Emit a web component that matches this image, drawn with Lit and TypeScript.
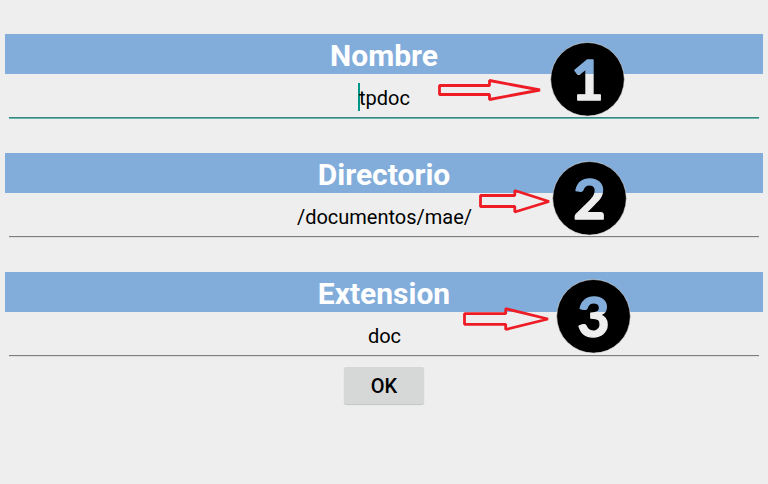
import { LitElement, html, css, svg } from "lit";
import { customElement, property } from "lit/decorators.js";

@customElement("form-field")
class FormField extends LitElement {
  @property() label = "";
  @property() value = "";
  @property({ type: Boolean, reflect: true }) active = false;

  static styles = css`
    :host { display: block; height: 85px; }
    .label {
      height: 40px; line-height: 43px; background: #82addb; color: #fff;
      font-size: 30px; font-weight: 700; text-align: center;
    }
    .entry {
      box-sizing: border-box; height: 45px; margin: 0 4px; padding-top: 9px;
      display: flex; justify-content: center; color: #000;
      font-size: 20px; line-height: 30px;
      border-bottom: 1px solid #dcdcdc;
      background: linear-gradient(#7f7f7f, #7f7f7f) 0 100% / 100% 1px no-repeat;
    }
    .entry { padding-left: 1px; }
    .caret { width: 2px; height: 28px; margin-right: -1px; margin-left: -1px; background: #009688; }
    :host([active]) .entry {
      border-bottom-color: #69b5ae;
      background-image: linear-gradient(#35877f, #35877f);
    }
  `;

  render() {
    return html`
      <div class="label">${this.label}</div>
      <div class="entry">
        ${this.active ? html`<span class="caret"></span>` : ""}<span>${this.value}</span>
      </div>`;
  }
}

const marks = [
  { n: "1", cx: 587.5, cy: 79.3, split: 74, arrow: "M439.5 85.5H489.5V80.5L540 90L489.5 99.5V94.5H439.5Z" },
  { n: "2", cx: 589.5, cy: 198.3, split: 193, arrow: "M480.5 195.5H514.8V190.5L549 201.5L514.8 212V206.5H480.5Z" },
  { n: "3", cx: 593.5, cy: 316.3, split: 312, arrow: "M464.5 313.7H505.7V308.7L548 319L505.7 329.5V324.3H464.5Z" },
];

@customElement("app-root")
class AppRoot extends LitElement {
  static styles = css`
    :host {
      display: block; position: relative; box-sizing: border-box;
      width: 768px; height: 484px; padding: 34px 5px 0; overflow: hidden;
      background: #eee; font-family: Roboto, sans-serif;
    }
    .fields { display: grid; gap: 34px; }
    .ok {
      display: block; width: 80px; height: 37px; margin: 10px auto 0; padding: 2px 0 0;
      border: 0; border-radius: 2px; background: #d6d8d7; color: #000;
      box-shadow: 0 1px 1px #c4c4c4; font: 500 20px/35px Roboto, sans-serif;
    }
    .notes { position: absolute; inset: 0; pointer-events: none; }
    .arrow { fill: none; stroke: #ee1c25; stroke-width: 2.8; stroke-linejoin: bevel; }
    .digit {
      font: 700 56px Lato, sans-serif; text-anchor: middle;
      stroke-width: 1.4; stroke-linejoin: round;
    }
  `;

  render() {
    return html`
      <div class="fields">
        <form-field label="Nombre" value="tpdoc" active></form-field>
        <form-field label="Directorio" value="/documentos/mae/"></form-field>
        <form-field label="Extension" value="doc"></form-field>
      </div>
      <button class="ok">OK</button>
      <svg class="notes" width="768" height="484">
        ${marks.map((m) => svg`
          <linearGradient id=${"g" + m.n} gradientUnits="userSpaceOnUse" x1="0" x2="0" y1=${m.split - 1} y2=${m.split + 1}>
            <stop offset="0.5" stop-color="#82addb"/><stop offset="0.5" stop-color="#eee"/>
          </linearGradient>
          <path class="arrow" d=${m.arrow}/>
          <circle cx=${m.cx} cy=${m.cy} r="36.8" stroke="#ddd" stroke-width="0.6"/>
          <text class="digit" x=${m.cx} y=${m.cy + 20.2} fill=${`url(#g${m.n})`} stroke=${`url(#g${m.n})`}>${m.n}</text>`)}
      </svg>`;
  }
}
